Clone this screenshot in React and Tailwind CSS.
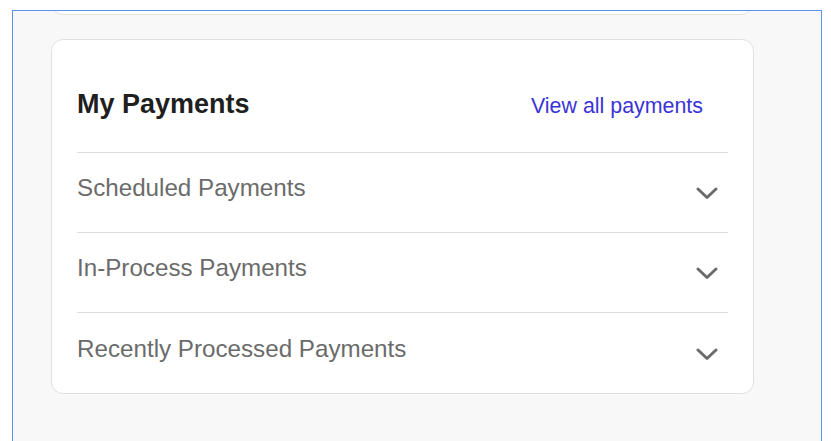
const rows = ['Scheduled Payments', 'In-Process Payments', 'Recently Processed Payments'];

const Chevron = () => (
  <svg width="22" height="13" viewBox="0 0 22 13" fill="none">
    <polyline points="2,2 11,10.5 20,2" stroke="#6b6b6b" strokeWidth="3" strokeLinecap="round" strokeLinejoin="round" />
  </svg>
);

const App = () => {
  return (
    <div className="h-[441px] overflow-hidden bg-white" style={{ fontFamily: '"Liberation Sans", Arial, sans-serif' }}>
      <div className="mt-[10px] ml-[12px] w-[810px] h-[460px] overflow-hidden border border-[#5a93ee] bg-[#f8f8f8]">
        {/* bottom of the card above, scrolled out of view */}
        <div className="-mt-[96px] ml-[38px] w-[702px] h-[100px] bg-white border border-[#e2e2e2] rounded-[12px]" />

        <div className="mt-[24px] ml-[38px] w-[703px] bg-white border border-[#e0e0e0] rounded-[12px]">
          <div className="px-[25px]">
            <div className="flex items-end justify-between h-[113px] pb-[32px] border-b border-[#dedede]">
              <h2 className="text-[27px] leading-[32px] font-bold text-[#1f1f1f]">My Payments</h2>
              <a href="#" className="mr-[25px] text-[21.4px] leading-[28px] text-[#3a34d6]">View all payments</a>
            </div>
            {rows.map((label, i) => (
              <div
                key={label}
                className={`flex items-center justify-between h-[80px] ${i < rows.length - 1 ? 'border-b border-[#dedede]' : ''}`}
              >
                <span className="mb-[9px] text-[24.2px] leading-[30px] text-[#6b6b6b]">{label}</span>
                <span className="mr-[10px] mt-[2px]">
                  <Chevron />
                </span>
              </div>
            ))}
          </div>
        </div>
      </div>
    </div>
  );
};

export default App;
